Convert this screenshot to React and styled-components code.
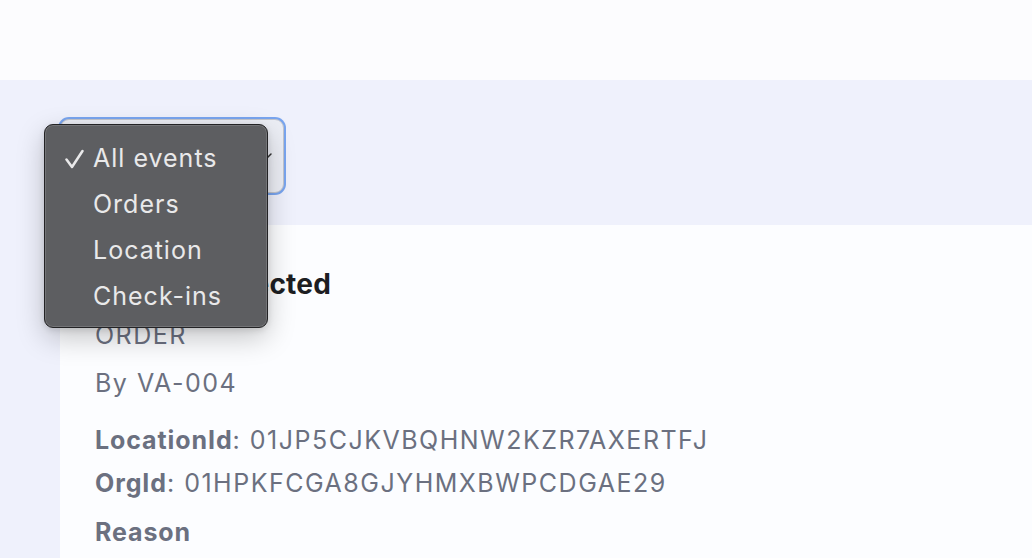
import React from "react";
import styled, { createGlobalStyle } from "styled-components";

const Global = createGlobalStyle`
  html, body { margin: 0; padding: 0; }
  body {
    background: #fcfcfe;
    font-family: Inter, "Noto Sans", "Liberation Sans", sans-serif;
    overflow: hidden;
  }
`;

const Page = styled.div`
  width: 1032px;
  height: 558px;
  display: flex;
  flex-direction: column;
`;

const TopBar = styled.header`
  height: 80px;
  flex: none;
  background: #fcfcfe;
`;

const Main = styled.main`
  flex: 1;
  background: #eff1fc;
  padding: 39px 0 0 60px;
  display: flex;
  flex-direction: column;
  gap: 32px;
`;

const SelectWrap = styled.div`
  position: relative;
  width: 224px;
  height: 74px;
`;

const SelectBox = styled.div`
  box-sizing: border-box;
  width: 100%;
  height: 100%;
  border-radius: 9px;
  background: #eceef5;
  border: 1px solid #c3c5cc;
  box-shadow: 0 0 0 2px #79a5ef;
  display: flex;
  align-items: center;
  justify-content: space-between;
  padding: 0 10px 0 32px;
  font-size: 24px;
  color: #1d1e22;
`;

const Chevron = styled.svg`
  width: 12px;
  height: 12px;
`;

const Menu = styled.ul`
  position: absolute;
  left: -16px;
  top: 5px;
  width: 224px;
  box-sizing: border-box;
  margin: 0;
  padding: 10px 0 8px;
  list-style: none;
  background: #5d5e61;
  border: 1px solid #232325;
  border-radius: 9px;
  box-shadow: inset 0 0 0 1px rgba(255, 255, 255, 0.14),
    0 10px 28px rgba(0, 0, 0, 0.22), 0 2px 6px rgba(0, 0, 0, 0.12);
  z-index: 10;
`;

const MenuItem = styled.li`
  position: relative;
  height: 46px;
  line-height: 46px;
  padding-left: 48px;
  font-size: 25px;
  color: #e9e9ea;
  letter-spacing: 1px;
`;

const Check = styled.svg`
  position: absolute;
  left: 19px;
  top: 13px;
  width: 20px;
  height: 22px;
`;

const Card = styled.section`
  flex: 1;
  background: #fcfdff;
  padding: 41px 0 0 35px;
  display: flex;
  flex-direction: column;
`;

const Title = styled.h2`
  margin: 0;
  font-size: 28px;
  line-height: 36px;
  font-weight: 700;
  color: #1d1e22;
  letter-spacing: 0.2px;
`;

const Line = styled.div`
  font-size: 25px;
  line-height: 36px;
  color: #6b7080;
  margin-top: ${(p) => p.$gap || 0}px;
  letter-spacing: 1.5px;
`;

const Label = styled.b`
  font-weight: 700;
  letter-spacing: 0.9px;
`;

export default function App() {
  return (
    <Page>
      <Global />
      <TopBar />
      <Main>
        <SelectWrap>
          <SelectBox>
            <span>All events</span>
            <Chevron viewBox="0 0 12 12">
              <path d="M2 4l4 4 4-4" fill="none" stroke="#333" strokeWidth="1.5" strokeLinecap="round" strokeLinejoin="round" />
            </Chevron>
          </SelectBox>
          <Menu>
            <MenuItem>
              <Check viewBox="0 0 20 22">
                <path d="M2.5 11.5l5.5 7.5 10.5-16" fill="none" stroke="#e9e9ea" strokeWidth="2.5" strokeLinecap="round" strokeLinejoin="round" />
              </Check>
              All events
            </MenuItem>
            <MenuItem>Orders</MenuItem>
            <MenuItem>Location</MenuItem>
            <MenuItem>Check-ins</MenuItem>
          </Menu>
        </SelectWrap>
        <Card>
          <Title>Order Redirected</Title>
          <Line $gap={15}>ORDER</Line>
          <Line $gap={12}>By VA-004</Line>
          <Line $gap={21}><Label>LocationId</Label>: 01JP5CJKVBQHNW2KZR7AXERTFJ</Line>
          <Line $gap={7}><Label>OrgId</Label>: 01HPKFCGA8GJYHMXBWPCDGAE29</Line>
          <Line $gap={13}><Label>Reason</Label></Line>
        </Card>
      </Main>
    </Page>
  );
}
